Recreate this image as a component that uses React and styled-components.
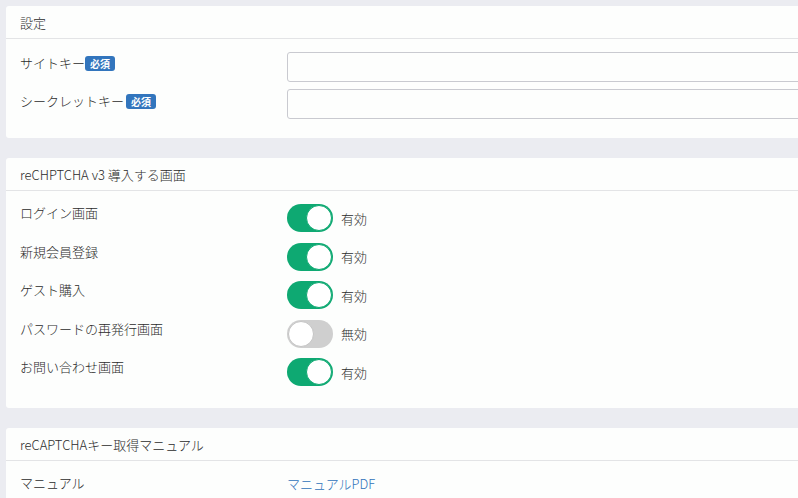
import styled, { createGlobalStyle } from 'styled-components'

const GlobalStyle = createGlobalStyle`
  html, body {
    margin: 0;
    padding: 0;
    overflow: hidden;
    background: #ebecf1;
  }
  body {
    font-family: "Noto Sans CJK JP", "Noto Sans", sans-serif;
    font-weight: 300;
    color: #2b2b2b;
    font-size: 13px;
  }
`

const Page = styled.div`
  width: 1100px;
  padding: 6px 0 0 6px;
  display: flex;
  flex-direction: column;
  gap: 20px;
`

const Card = styled.section`
  background: #fdfefd;
  border-radius: 3px;
  padding-bottom: ${(p) => p.$bottom || 0}px;
`

const CardHeader = styled.div`
  height: 32px;
  display: flex;
  align-items: center;
  padding: 0 14px;
  border-bottom: 1px solid #e3e4e6;
  font-size: 13px;
`

const CardBody = styled.div`
  padding: ${(p) => p.$top || 13}px 0 0 14px;
  display: flex;
  flex-direction: column;
  gap: ${(p) => p.$gap || 0}px;
`

const Row = styled.div`
  display: grid;
  grid-template-columns: 267px 1fr;
  align-items: start;
  min-height: ${(p) => p.$h || 30}px;
`

const Label = styled.div`
  display: flex;
  align-items: center;
  font-size: 13px;
  padding-top: ${(p) => p.$pt || 0}px;
  line-height: 18px;
`

const Badge = styled.span`
  display: inline-block;
  background: #3275bd;
  color: #fff;
  font-size: 10px;
  font-weight: bold;
  line-height: 15px;
  padding: 0 5px;
  border-radius: 3px;
  margin-left: ${(p) => p.$ml || 0}px;
`

const Input = styled.input`
  box-sizing: border-box;
  width: 800px;
  height: 30px;
  border: 1px solid #c9cad0;
  border-radius: 3px;
  background: #fdfefd;
`

const Toggle = styled.span`
  position: relative;
  display: inline-block;
  box-sizing: border-box;
  width: 46px;
  height: 28px;
  border-radius: 14px;
  background: ${(p) => (p.$on ? '#0ea972' : '#cfcfcf')};
  &::after {
    content: '';
    position: absolute;
    top: 1px;
    ${(p) => (p.$on ? 'right: 1px;' : 'left: 1px;')}
    width: 24px;
    height: 24px;
    border-radius: 50%;
    background: #fff;
    border: 1px solid ${(p) => (p.$on ? '#0ea972' : '#c4c4c4')};
  }
`

const Switch = styled.div`
  display: flex;
  align-items: center;
  gap: 8px;
  font-size: 13px;
`

const ManualLink = styled.a`
  color: #2f72ba;
  text-decoration: none;
  font-size: 13px;
`

const screens = [
  ['ログイン画面', true],
  ['新規会員登録', true],
  ['ゲスト購入', true],
  ['パスワードの再発行画面', false],
  ['お問い合わせ画面', true],
]

export default function App() {
  return (
    <>
      <GlobalStyle />
      <Page>
        <Card $bottom={19}>
          <CardHeader>設定</CardHeader>
          <CardBody $top={13} $gap={7}>
            <Row>
              <Label $pt={2}>
                サイトキー<Badge>必須</Badge>
              </Label>
              <Input type="text" />
            </Row>
            <Row>
              <Label $pt={3}>
                シークレットキー<Badge $ml={2}>必須</Badge>
              </Label>
              <Input type="text" />
            </Row>
          </CardBody>
        </Card>

        <Card $bottom={22}>
          <CardHeader>reCHPTCHA v3 導入する画面</CardHeader>
          <CardBody $top={13} $gap={10.5}>
            {screens.map(([name, on]) => (
              <Row key={name} $h={28}>
                <Label $pt={0}>{name}</Label>
                <Switch>
                  <Toggle $on={on} />
                  {on ? '有効' : '無効'}
                </Switch>
              </Row>
            ))}
          </CardBody>
        </Card>

        <Card $bottom={40}>
          <CardHeader>reCAPTCHAキー取得マニュアル</CardHeader>
          <CardBody $top={13}>
            <Row $h={20}>
              <Label>マニュアル</Label>
              <ManualLink href="#">マニュアルPDF</ManualLink>
            </Row>
          </CardBody>
        </Card>
      </Page>
    </>
  )
}
